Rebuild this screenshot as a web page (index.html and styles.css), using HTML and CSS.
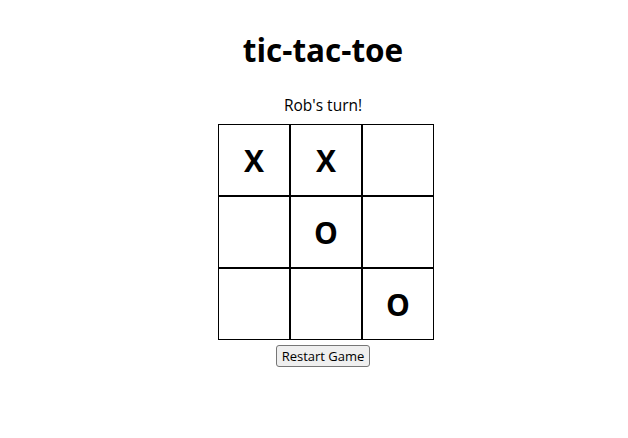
FILE: index.html
```html
<!DOCTYPE html>
<html>
<head>
<meta charset="utf-8">
<link rel="stylesheet" href="styles.css">
</head>
<body>
<div class="app">
  <h1 class="title">tic-tac-toe</h1>
  <p class="status">Rob's turn!</p>
  <div class="board">
    <div class="cell">X</div>
    <div class="cell">X</div>
    <div class="cell"></div>
    <div class="cell"></div>
    <div class="cell">O</div>
    <div class="cell"></div>
    <div class="cell"></div>
    <div class="cell"></div>
    <div class="cell">O</div>
  </div>
  <button class="restart">Restart Game</button>
</div>
</body>
</html>
```
FILE: styles.css
```css
body {
  margin: 0;
  font-family: "Open Sans", "DejaVu Sans", sans-serif;
  color: #000;
  background: #fff;
}
.app {
  display: flex;
  flex-direction: column;
  align-items: center;
  padding-left: 18px;
  padding-top: 28px;
}
.title {
  margin: 0;
  font-size: 31.5px;
  font-weight: 700;
  line-height: 44px;
}
.status {
  margin: 22px 0 0;
  font-size: 15.5px;
  line-height: 22px;
}
.board {
  margin-top: 8px;
  margin-left: 6px;
  display: grid;
  grid-template-columns: repeat(3, 72px);
  grid-template-rows: repeat(3, 72px);
}
.cell {
  box-sizing: border-box;
  border: 1px solid #000;
  display: flex;
  align-items: center;
  justify-content: center;
  font-size: 30px;
  font-weight: 700;
}
.restart {
  margin-top: 5px;
  font-family: "Open Sans", "DejaVu Sans", sans-serif;
  font-size: 13px;
  height: 22px;
  padding: 0 5px;
  background: #efefef;
  border: 1px solid #767676;
  border-radius: 3px;
  color: #000;
}
```
